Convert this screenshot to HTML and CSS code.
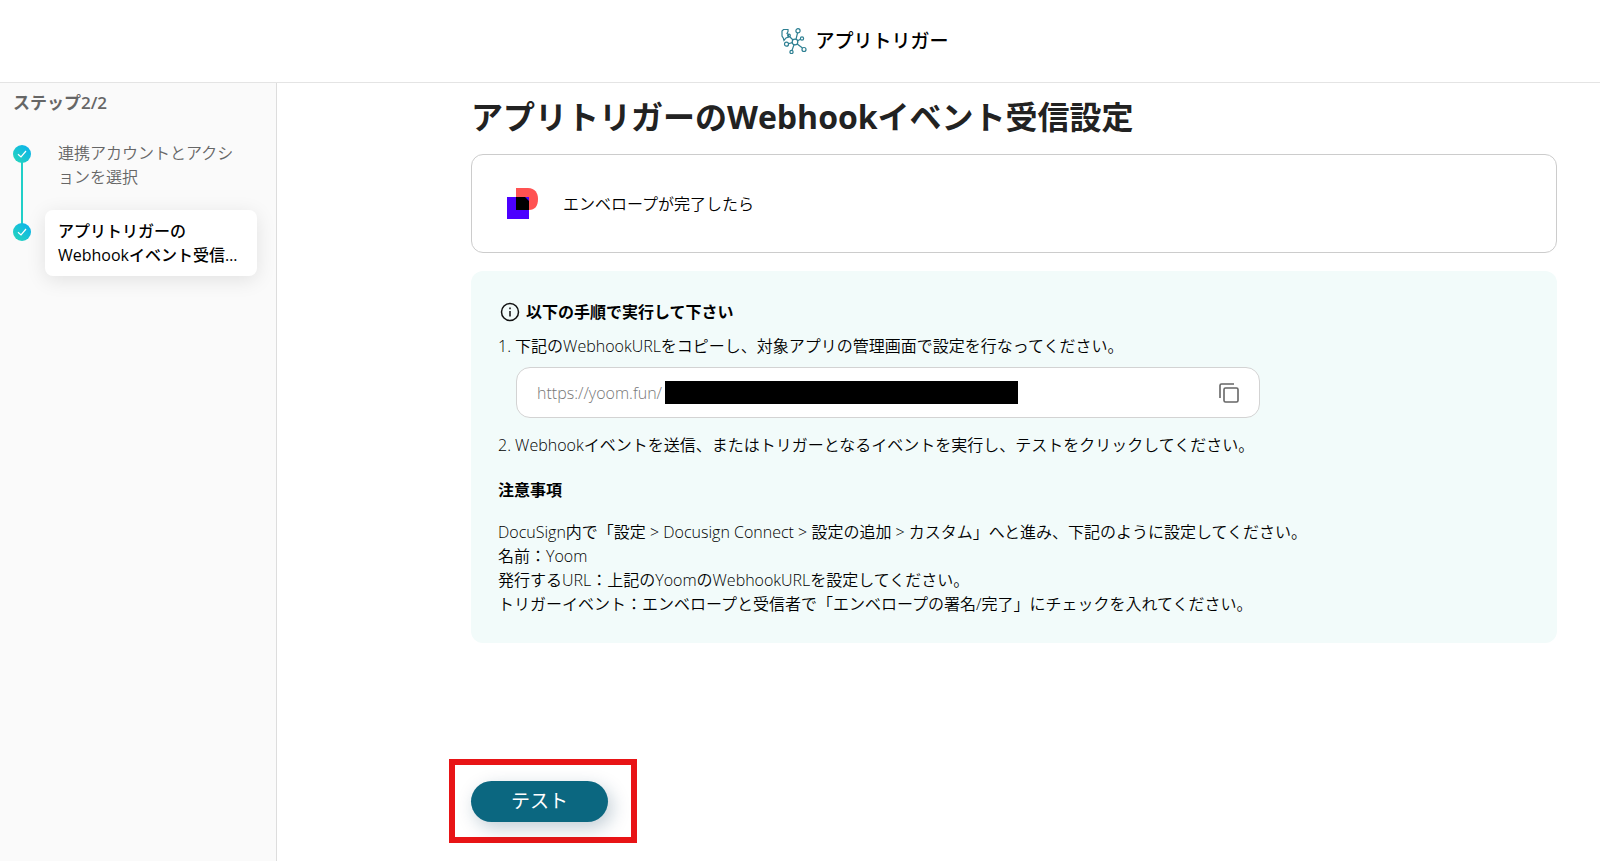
FILE: index.html
```
<!DOCTYPE html>
<html lang="ja">
<head>
    <meta charset="UTF-8">
    <meta name="viewport" content="width=device-width, initial-scale=1.0">
    <title>アプリトリガー</title>
    <link rel="stylesheet" href="styles.css">
</head>
<body>
    <header class="header">
        <svg class="header-icon" width="26" height="26" viewBox="0 0 26 26" fill="none" stroke="#2d7f92" stroke-width="1.2">
            <circle cx="14" cy="14" r="2.800"/>
            <circle cx="17" cy="2.800" r="2.100"/>
            <circle cx="21" cy="10.500" r="1.600"/>
            <circle cx="23" cy="21.500" r="2"/>
            <circle cx="10.500" cy="24" r="1.600"/>
            <circle cx="5.500" cy="16.200" r="2"/>
            <path d="M16.500 5L15 11.300M19.400 11.200L16.600 12.800M21.500 20L16.200 16M11 22.400L13 16.700M7.400 15.800L11.200 14.600M8.500 8.500L12 12"/>
            <path d="M7 1.500H2.500L1 3V8L2.500 10.500L3 12.500L5 10L7.500 9V6.500L6 5.500L7 3.500Z"/>
            <circle cx="8" cy="7.500" r="1.300"/>
        </svg>
        <span>アプリトリガー</span>
    </header>
    <div class="container">
        <aside class="sidebar">
            <p class="sidebar-title">ステップ2/2</p>
            <ol class="steps">
                <li class="step">
                    <svg class="check" width="18" height="18" viewBox="0 0 18 18">
                        <defs>
                            <linearGradient id="grad" x1="0" y1="1" x2="1" y2="0">
                                <stop offset="0" stop-color="#28d8b8"/>
                                <stop offset="1" stop-color="#08aff0"/>
                            </linearGradient>
                        </defs>
                        <circle cx="9" cy="9" r="9" fill="url(#grad)"/>
                        <path d="M5 9.200L8 12L13 6" fill="none" stroke="#fff" stroke-width="1.200"/>
                    </svg>
                    <a href="#" class="step-name">連携アカウントとアクションを選択</a>
                </li>
                <li class="step">
                    <svg class="check" width="18" height="18" viewBox="0 0 18 18">
                        <circle cx="9" cy="9" r="9" fill="url(#grad)"/>
                        <path d="M5 9.200L8 12L13 6" fill="none" stroke="#fff" stroke-width="1.200"/>
                    </svg>
                    <a href="#" class="step-name active">アプリトリガーの<br>Webhookイベント受信…</a>
                </li>
            </ol>
        </aside>
        <main class="main">
            <h1>アプリトリガーのWebhookイベント受信設定</h1>
            <div class="trigger">
                <svg width="32" height="32" viewBox="0 0 32 32">
                    <path d="M9 0H21C28 0 31 5 31 11C31 18 28 22 22 22H9Z" fill="#ff5252"/>
                    <path d="M0 9H22V31H0Z" fill="#4c00ff"/>
                    <path d="M9 9H18L22 13V22H9Z" fill="#000"/>
                </svg>
                <p>エンベロープが完了したら</p>
            </div>
            <section class="info">
                <h2>
                    <svg width="20" height="20" viewBox="0 0 20 20" fill="none" stroke="#111" stroke-width="1.500">
                        <circle cx="10" cy="10" r="8.500"/>
                        <path d="M10 9V14.500M10 5.500V7.300"/>
                    </svg>
                    以下の手順で実行して下さい
                </h2>
                <p><label for="url">1. 下記のWebhookURLをコピーし、対象アプリの管理画面で設定を行なってください。</label></p>
                <div class="url-box">
                    <input type="text" id="url" value="https://yoom.fun/" readonly>
                    <span class="mask"></span>
                    <button type="button" class="copy" aria-label="コピー">
                        <svg width="20" height="20" viewBox="0 0 20 20" fill="none" stroke="#666" stroke-width="1.600">
                            <rect x="5" y="5" width="14" height="14" rx="1.500"/>
                            <path d="M1 15V2.500Q1 1 2.500 1H15"/>
                        </svg>
                    </button>
                </div>
                <p>2. Webhookイベントを送信、またはトリガーとなるイベントを実行し、テストをクリックしてください。</p>
                <h3>注意事項</h3>
                <p>
                    DocuSign内で「設定 &gt; Docusign Connect &gt; 設定の追加 &gt; カスタム」へと進み、下記のように設定してください。<br>
                    名前：Yoom<br>
                    発行するURL：上記のYoomのWebhookURLを設定してください。<br>
                    トリガーイベント：エンベロープと受信者で「エンベロープの署名/完了」にチェックを入れてください。
                </p>
            </section>
            <div class="highlight">
                <button type="button" class="test">テスト</button>
            </div>
        </main>
    </div>
</body>
</html>
```
FILE: styles.css
```
*,
*:after,
*:before
{
    margin: 0;
    padding: 0;
    box-sizing: border-box;
}
body
{
    min-height: 100vh;
    display: flex;
    flex-direction: column;
    font-family: "Open Sans", "Noto Sans CJK JP", sans-serif;
    font-size: 16px;
    line-height: 24px;
    color: #000;
    background: #fff;
}
button, input
{
    font-family: inherit;
    border: none;
    background: none;
}
svg
{
    flex-shrink: 0;
}
.header
{
    height: 83px;
    padding-left: 130px;
    display: flex;
    justify-content: center;
    align-items: center;
    gap: 8px;
    border-bottom: 1px solid #e4e4e4;
    font-size: 19px;
    font-weight: 500;
}
.container
{
    flex: 1;
    display: flex;
}

/* sidebar */
.sidebar
{
    width: 277px;
    flex-shrink: 0;
    padding: 8px 19px 0 13px;
    background: #fafafa;
    border-right: 1px solid #ddd;
}
.sidebar-title
{
    font-size: 17px;
    font-weight: 600;
    color: #666;
}
.steps
{
    list-style: none;
    margin-top: 17px;
}
.step
{
    position: relative;
    display: flex;
    gap: 14px;
    margin-bottom: 12px;
}
.step:first-child:before
{
    content: "";
    position: absolute;
    left: 8px;
    top: 30px;
    width: 2px;
    height: 62px;
    background: #1fcfc8;
}
.check
{
    margin-top: 13px;
}
.step-name
{
    flex: 1;
    padding: 9px 13px;
    border-radius: 8px;
    color: #666;
    font-weight: 350;
    text-decoration: none;
}
.step-name.active
{
    background: #fff;
    color: #000;
    font-weight: 500;
    white-space: nowrap;
    box-shadow: 0 4px 20px rgba(0,0,0,.1);
}

/* main */
.main
{
    flex: 1;
    padding: 10px 43px 16px 194px;
}
h1
{
    font-size: 32px;
    line-height: 48px;
    font-weight: 700;
    color: #222;
}
.trigger
{
    display: flex;
    align-items: center;
    gap: 24px;
    height: 99px;
    margin-top: 13px;
    padding: 0 35px;
    border: 1px solid #ccc;
    border-radius: 12px;
    font-weight: 350;
}
.info
{
    margin-top: 18px;
    padding: 29px 27px 27px;
    border-radius: 12px;
    background: #f2fbfa;
    font-weight: 350;
}
.info h2
{
    display: flex;
    align-items: center;
    gap: 6px;
    margin-bottom: 10px;
    padding-left: 2px;
    font-size: 16px;
    font-weight: 600;
}
.info h3
{
    margin: 21px 0 18px;
    font-size: 16px;
    font-weight: 600;
}
.url-box
{
    position: relative;
    display: flex;
    align-items: center;
    width: 744px;
    max-width: 100%;
    height: 51px;
    margin: 9px 0 15px 18px;
    padding: 0 20px;
    border: 1px solid #d3d3d3;
    border-radius: 14px;
    background: #fff;
}
.url-box input
{
    flex: 1;
    font-size: 16px;
    font-weight: 350;
    color: #777;
    outline: none;
}
.mask
{
    position: absolute;
    left: 148px;
    top: 13px;
    width: 353px;
    height: 23px;
    background: #000;
}
.copy
{
    display: flex;
    cursor: pointer;
}
.highlight
{
    width: fit-content;
    margin: 116px 0 0 -22px;
    padding: 16px 23px 15px 16px;
    border: 6px solid #e81416;
}
.test
{
    display: block;
    width: 137px;
    height: 41px;
    padding-bottom: 3px;
    border-radius: 21px;
    background: #0b6780;
    box-shadow: 4px 6px 18px rgba(11,60,90,.25);
    font-size: 19px;
    color: #fff;
    cursor: pointer;
}
```
